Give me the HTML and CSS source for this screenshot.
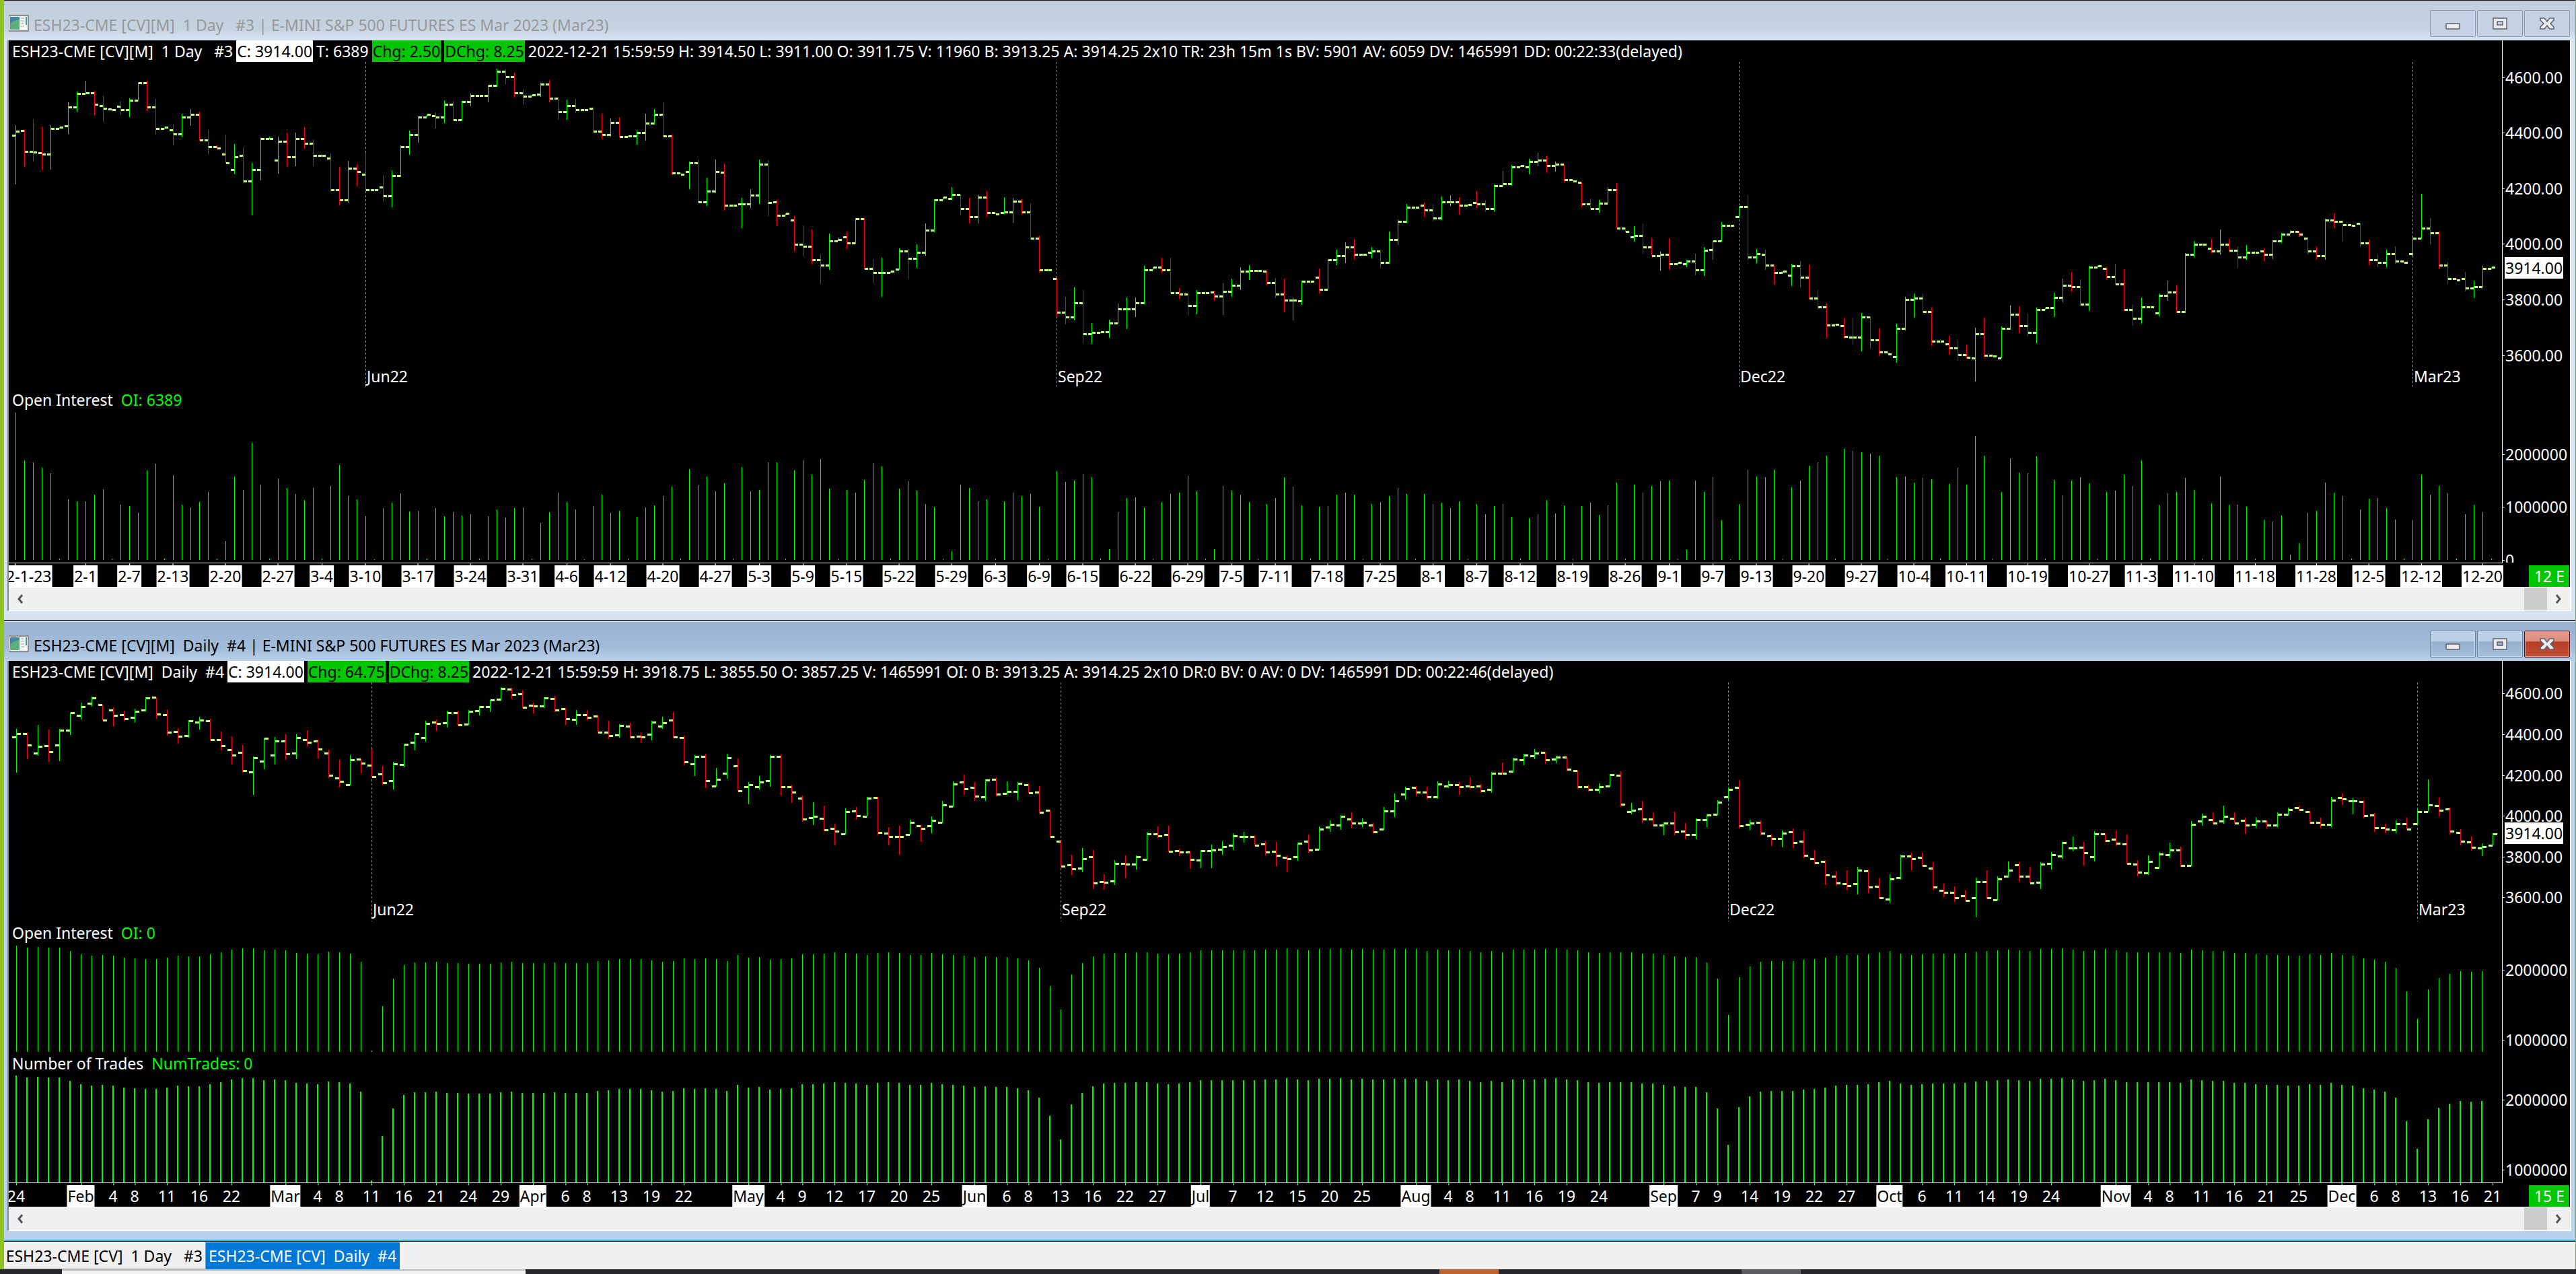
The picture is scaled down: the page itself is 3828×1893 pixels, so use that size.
FILE: index.html
```html
<!DOCTYPE html>
<html lang="en">
  <head>
    <title>ESH23-CME Charts</title>
    <meta charset="UTF-8" />
    <link rel="stylesheet" href="styles.css">
  </head>
  <body>
    <main class="workspace">
      <section class="window inactive">
        <header class="titlebar">
          <svg class="app-icon" viewBox="0 0 30 26">
            <rect x="0" y="1" width="30" height="25" fill="#8b8f92" />
            <rect x="1" y="3" width="27" height="21" fill="#f6f6f6" />
            <rect x="2" y="4" width="14" height="19" fill="#3f86a8" />
            <path d="M2 14 Q9 8 16 8 V23 H2 Z" fill="#5cae7a" />
            <path d="M18 6h5M18 10h5M18 14h5M18 18h5" stroke="#a5a5a5" stroke-width="1" />
            <rect x="25" y="4" width="2" height="12" fill="#4a97a0" />
          </svg>
          <h1 class="title">ESH23-CME [CV][M]  1 Day   #3 | E-MINI S&amp;P 500 FUTURES ES Mar 2023 (Mar23)</h1>
          <div class="controls">
            <button class="control" aria-label="Minimize">
              <svg viewBox="0 0 24 24"><rect x="2" y="12" width="20" height="8" rx="1" /></svg>
            </button>
            <button class="control" aria-label="Maximize">
              <svg viewBox="0 0 24 24"><path d="M2 4h20v16H2zM8 9v5h8V9z" fill-rule="evenodd" /></svg>
            </button>
            <button class="control" aria-label="Close">
              <svg viewBox="0 0 24 24"><path d="M2 4h6l4 5 4-5h6v3l-5 5 5 5v3h-6l-4-5-4 5H2v-3l5-5-5-5z" /></svg>
            </button>
          </div>
        </header>
        <div class="client">
          <div class="chart chart-session" id="chart3">
            <div class="panel" data-panel="price">
              <div class="plot-column">
                <div class="readout"><span>ESH23-CME [CV][M]  1 Day   #3</span><span class="last">C: 3914.00</span><span>T: 6389</span><span class="up">Chg: 2.50</span><span class="up">DChg: 8.25</span><span>2022-12-21 15:59:59 H: 3914.50 L: 3911.00 O: 3911.75 V: 11960 B: 3913.25 A: 3914.25 2x10 TR: 23h 15m 1s BV: 5901 AV: 6059 DV: 1465991 DD: 00:22:33(delayed)</span></div>
                <div class="plot"></div>
              </div>
              <div class="scale"></div>
            </div>
            <div class="panel" data-panel="interest">
              <div class="plot-column padded">
                <div class="caption">Open Interest  <span class="value">OI: 6389</span></div>
                <div class="plot"></div>
              </div>
              <div class="scale"></div>
            </div>
            <div class="dates"><span class="remaining">12 E</span></div>
          </div>
          <div class="scrollbar">
            <button class="arrow" aria-label="Scroll left"><svg viewBox="0 0 12 14"><path d="M9 1 L4 7 L9 13" /></svg></button>
            <div class="track"><div class="thumb"></div></div>
            <button class="arrow" aria-label="Scroll right"><svg viewBox="0 0 12 14"><path d="M3 1 L8 7 L3 13" /></svg></button>
          </div>
        </div>
      </section>

      <section class="window active">
        <header class="titlebar">
          <svg class="app-icon" viewBox="0 0 30 26">
            <rect x="0" y="1" width="30" height="25" fill="#8b8f92" />
            <rect x="1" y="3" width="27" height="21" fill="#f6f6f6" />
            <rect x="2" y="4" width="14" height="19" fill="#3f86a8" />
            <path d="M2 14 Q9 8 16 8 V23 H2 Z" fill="#5cae7a" />
            <path d="M18 6h5M18 10h5M18 14h5M18 18h5" stroke="#a5a5a5" stroke-width="1" />
            <rect x="25" y="4" width="2" height="12" fill="#4a97a0" />
          </svg>
          <h1 class="title">ESH23-CME [CV][M]  Daily  #4 | E-MINI S&amp;P 500 FUTURES ES Mar 2023 (Mar23)</h1>
          <div class="controls">
            <button class="control" aria-label="Minimize">
              <svg viewBox="0 0 24 24"><rect x="2" y="12" width="20" height="8" rx="1" /></svg>
            </button>
            <button class="control" aria-label="Maximize">
              <svg viewBox="0 0 24 24"><path d="M2 4h20v16H2zM8 9v5h8V9z" fill-rule="evenodd" /></svg>
            </button>
            <button class="control close" aria-label="Close">
              <svg viewBox="0 0 24 24"><path d="M2 4h6l4 5 4-5h6v3l-5 5 5 5v3h-6l-4-5-4 5H2v-3l5-5-5-5z" /></svg>
            </button>
          </div>
        </header>
        <div class="client">
          <div class="chart chart-daily" id="chart4">
            <div class="panel" data-panel="price">
              <div class="plot-column">
                <div class="readout"><span>ESH23-CME [CV][M]  Daily  #4</span><span class="last">C: 3914.00</span><span class="up">Chg: 64.75</span><span class="up">DChg: 8.25</span><span>2022-12-21 15:59:59 H: 3918.75 L: 3855.50 O: 3857.25 V: 1465991 OI: 0 B: 3913.25 A: 3914.25 2x10 DR:0 BV: 0 AV: 0 DV: 1465991 DD: 00:22:46(delayed)</span></div>
                <div class="plot"></div>
              </div>
              <div class="scale"></div>
            </div>
            <div class="panel" data-panel="interest">
              <div class="plot-column">
                <div class="caption">Open Interest  <span class="value">OI: 0</span></div>
                <div class="plot"></div>
              </div>
              <div class="scale"></div>
            </div>
            <div class="panel" data-panel="trades">
              <div class="plot-column">
                <div class="caption">Number of Trades  <span class="value">NumTrades: 0</span></div>
                <div class="plot"></div>
              </div>
              <div class="scale"></div>
            </div>
            <div class="dates"><span class="remaining">15 E</span></div>
          </div>
          <div class="scrollbar">
            <button class="arrow" aria-label="Scroll left"><svg viewBox="0 0 12 14"><path d="M9 1 L4 7 L9 13" /></svg></button>
            <div class="track"><div class="thumb"></div></div>
            <button class="arrow" aria-label="Scroll right"><svg viewBox="0 0 12 14"><path d="M3 1 L8 7 L3 13" /></svg></button>
          </div>
        </div>
      </section>

      <nav class="tabs">
        <button class="tab first">ESH23-CME [CV]  1 Day   #3</button>
        <button class="tab selected">ESH23-CME [CV]  Daily  #4</button>
      </nav>
    </main>
    <footer class="taskbar">
      <div class="task-search"></div>
      <div class="task-orange"></div>
      <div class="task-gray"></div>
    </footer>
    <script src="script.js"></script>
  </body>
</html>
```
FILE: styles.css
```css
* {
  box-sizing: border-box;
}

body {
  margin: 0;
  height: 100vh;
  display: flex;
  flex-direction: column;
  font-family: "Noto Sans", "Open Sans", sans-serif;
  font-size: 23px;
  line-height: 32px;
  background: #222428;
  overflow: hidden;
}

button {
  font: inherit;
  margin: 0;
  padding: 0;
}

.workspace {
  flex: 1;
  min-height: 0;
  display: flex;
  flex-direction: column;
  border-left: 6px solid #8fc31f;
  border-right: 1px solid #7fb03a;
}

.window {
  flex: 1;
  min-height: 0;
  display: flex;
  flex-direction: column;
  border-top: 2px solid #3b3d44;
  padding: 0 6px 13px 5px;
}

.inactive {
  background: #d7e4f2;
}

.active {
  background: #b9d1ea;
}

/* title bars */

.titlebar {
  height: 58px;
  flex: none;
  display: flex;
  align-items: flex-end;
  margin: 0 -6px 0 -5px;
  padding: 0 8px 5px 7px;
  border-top: 1px solid #eef2f6;
}

.inactive .titlebar {
  background: linear-gradient(#c2cfde, #c5d3e1 70%, #d8e6f3);
  color: #999;
}

.active .titlebar {
  height: 59px;
  background: linear-gradient(#98b4d2, #a2bbd8 65%, #b9d1ea);
  color: #000;
}

.app-icon {
  width: 30px;
  height: 26px;
  margin-bottom: 8px;
}

.title {
  flex: 1;
  margin: 0 0 2px 7px;
  font-size: 23px;
  font-weight: normal;
  line-height: 32px;
  white-space: pre;
}

.controls {
  display: flex;
  gap: 2px;
}

.control {
  width: 68px;
  height: 40px;
  display: flex;
  align-items: center;
  justify-content: center;
  border: 1px solid #8899b4;
  border-radius: 2px;
  background: #c4d2e4;
  box-shadow: inset 0 0 0 1px #cfdbe9;
}

.control svg {
  width: 24px;
  height: 24px;
  fill: #ececec;
  stroke: #5a6070;
  stroke-width: 1.5;
}

.active .control {
  border-color: #6c7f9c;
  background: linear-gradient(#bdd2e9, #b9cfe6 40%, #96b0cd 41%, #a3bddb);
  box-shadow: inset 0 0 0 1px #c6d9ed;
}

.active .close {
  border-color: #4a1520;
  background: linear-gradient(#e39a8c, #dc8d80 40%, #b53c26 41%, #c25038);
  box-shadow: inset 0 0 0 1px #e0a296;
}

/* charts */

.client {
  flex: 1;
  min-height: 0;
  display: flex;
  flex-direction: column;
  border-left: 2px solid #808890;
  border-right: 2px solid #fff;
  border-bottom: 1px solid #fff;
}

.chart {
  flex: 1;
  min-height: 0;
  display: grid;
  background: #000;
  color: #fff;
  overflow: hidden;
}

.chart-session {
  grid-template-rows: 517fr 259fr 36px;
}

.chart-daily {
  grid-template-rows: 387fr 195fr 194fr 36px;
}

.panel {
  display: flex;
  min-height: 0;
  overflow: hidden;
}

.plot-column {
  flex: 1;
  min-width: 0;
  display: flex;
  flex-direction: column;
}

.padded {
  padding-bottom: 4px;
}

.readout {
  display: flex;
  gap: 5px;
  padding-left: 5px;
  line-height: 32px;
  white-space: pre;
}

.last {
  background: #fff;
  color: #000;
  padding: 0 1px;
}

.up {
  background: #00c800;
  color: #000;
  padding: 0 1px;
}

.caption {
  padding-left: 5px;
  line-height: 34px;
  white-space: pre;
}

.value {
  color: #00ff00;
}

.plot {
  flex: 1;
  min-height: 0;
  position: relative;
}

.plot svg {
  display: block;
  width: 100%;
  height: 100%;
  shape-rendering: crispEdges;
}

.wick-up,
.bars {
  stroke: #00ff00;
  fill: none;
}

.wick-down {
  stroke: #ff0000;
  fill: none;
}

.price-ticks {
  stroke: #c0ff80;
  stroke-width: 3;
  fill: none;
}

.rollover-line {
  stroke: #8c8c8c;
  stroke-dasharray: 3 3;
}

.rollover {
  position: absolute;
  bottom: 0;
  line-height: 36px;
}

.scale {
  width: 101px;
  position: relative;
  border-left: 1px solid #fff;
  overflow: hidden;
}

.scale-label {
  position: absolute;
  left: 0;
  padding: 0 1px 0 4px;
  line-height: 32px;
  transform: translateY(-50%);
}

.scale-label::before {
  content: "";
  position: absolute;
  left: 0;
  top: 16px;
  width: 3px;
  height: 1px;
  background: #fff;
}

.scale-label.current {
  left: 3px;
  padding: 0 1px;
  background: #fff;
  color: #000;
}

.dates {
  position: relative;
  overflow: hidden;
}

.axis-line {
  height: 1px;
  background: #fff;
}

.date {
  position: absolute;
  top: 4px;
  height: 32px;
  padding: 0 1px;
  transform: translateX(-50%);
}

.date.boxed {
  background: #fff;
  color: #000;
}

.date::before {
  content: "";
  position: absolute;
  left: 50%;
  top: -4px;
  width: 1px;
  height: 4px;
  background: #fff;
}

.remaining {
  position: absolute;
  top: 4px;
  right: 1px;
  width: 60px;
  height: 32px;
  padding-right: 7px;
  text-align: right;
  background: #00c800;
}

/* scroll bars */

.scrollbar {
  height: 35px;
  flex: none;
  display: flex;
  background: #f0f0f0;
  border-top: 1px solid #fff;
}

.arrow {
  width: 34px;
  border: 0;
  background: none;
  display: flex;
  align-items: center;
  justify-content: center;
}

.arrow svg {
  width: 12px;
  height: 14px;
  fill: none;
  stroke: #555;
  stroke-width: 3;
}

.track {
  flex: 1;
  display: flex;
  justify-content: flex-end;
}

.thumb {
  width: 34px;
  background: #cdcdcd;
}

/* bottom strip */

.tabs {
  flex: none;
  height: 44px;
  display: flex;
  background: #f0f0f0;
  border-top: 2px solid #35b5d8;
  box-shadow: inset 0 1px #111, inset 0 2px #fff;
  padding-top: 2px;
}

.tab {
  height: 40px;
  border: 0;
  border-right: 1px solid #999;
  border-bottom: 1px solid #999;
  padding: 0 4px;
  background: #f0f0f0;
  color: #000;
  white-space: pre;
}

.tab.first {
  width: 300px;
  display: flex;
  align-items: center;
  justify-content: flex-end;
  overflow: hidden;
}

.tab.selected {
  background: #0078d7;
  color: #fff;
  border-color: #0078d7;
}

.taskbar {
  height: 7px;
  flex: none;
  display: flex;
  background: #24262b;
}

.task-search {
  width: 18%;
  margin-left: 92px;
  border-top: 2px solid #bdbdbd;
  background: #f2f2f2;
}

.task-orange {
  width: 88px;
  margin-left: 1358px;
  background: #c0622c;
}

.task-gray {
  width: 88px;
  margin-left: 361px;
  background: #5a5c60;
}
```
FILE: script.js
```js
// Each bar is listed as levels counted down from `base` in units of `step`:
//   close | open close | high low close | open high low close
// A missing open repeats the previous close.
const sessionPrices = [
  {
    base: 4877.8,
    step: 0.9579,
    bars: `509 470 692 493,491 487 627 568,450 606 572,573 475 640 580,470 637 484,479,474 384 502 403,345 420 352,303 352 348,341 432 393,
396 360 458 408,409 411,399 380 432 413,370 440 378,311 380 312,303 417 403,372 506 484,479,487 468 546 502,427 516 441,
410 473 431,420 530 525,487 579 552,545 560 557,578 506 615 613,638 541 656 588,585 554 690 681,612 809 638,517 678 521,513 524 520,
603 513 652 532,498 627 588,498 625 522,478 559 538,524 622 583,583,595 577 721 714,627 771 752,604 761 631,617 701 646,
654 574 718 712,712,702 660 756 737,640 779 659,546 665 552,491 582 505,437 536 439,431,436 422 483 441,377 463 391,
379 452 449,380 452 381,352 400 358,358,320 384 322,258 325 269,261 315 289,273 367 350,336 392 361,356,
355 312 363 315,301 384 370,363 450 421,375 450 396,398 373 425 411,411,406 403 494 492,427 524 505,445 513 459,441 517 514,
514 510,491 544 499,427 529 464,410 468 431,384 517 512,506 655 651,654,646 607 711 613,599 764 758,668 774 717,
599 726 646,648 615 792 770,772,767 744 857 767,711 781 734,599 766 616,602 812 760,758 751 850 808,801,826 812 946 919,
847 964 925,862 994 977,956 1067 997,878 1014 904,893 905 901,891 870 936 914,820 916 823,818 1012 1010,974 1065 1023,969 1115 1023,
1018,1011 933 1013 942,936 1050 972,918 1007 947,840 961 866,748 873 750,742,745 703 751 732,730 809 783,744 840 813,
731 840 740,718 814 798,803,800 741 805 796,744 837 755,748 806 796,764 900 896,885 1024 1013,1008 1018 1015,1046 1045 1191 1172,
1115 1219 1192,1080 1204 1137,1090 1290 1253,1214 1292 1250,1246,1201 1270 1213,1141 1216 1160,1118 1237 1160,1118 1191 1137,998 1143 1013,
1005,969 1027 1013,969 1103 1099,1082 1123 1106,1099 1186 1147,1090 1181 1099,1099,1097 1093 1130 1112,1065 1184 1094,1047 1115 1071,
1004 1090 1020,996 1052 1016,1016,1020 1017 1072 1061,1044 1120 1104,1047 1173 1127,1118 1204 1127,1129 1055 1146 1058,1056,1043 1009 1103 1086,
975 1088 977,938 996 960,910 989 927,898 976 955,957 955,949 928 971 944,943 1006 987,870 990 899,824 921 833,766 836 780,
778,772 761 813 788,766 832 820,738 827 758,733 774 758,741 807 770,768,760 718 781 765,754 797 783,693 797 699,
642 701 691,620 698 626,623,628 597 655 608,574 625 601,587 650 623,607 645 618,617 685 676,679,686 685 779 765,
746 792 783,751 799 763,703 764 714,688 858 856,855 872 871,891 850 908 884,840 953 927,895 962 960,946 1017 957,895 1014 990,
985,990 976 1004 982,953 1034 1015,928 1037 941,939 905 976 906,835 908 848,848,815 776 818 777,733 978 965,936 989 952,
955 938 1014 997,995 1070 1025,1018,1033 991 1075 1000,981 1080 1043,994 1122 1121,1090 1163 1152,1141 1270 1220,1218,1225 1196 1272 1263,
1266 1194 1295 1268,1176 1320 1192,1190 1310 1276,1234 1338 1322,1329,1341 1216 1363 1235,1115 1242 1124,1103 1194 1121,1103 1176 1171,1156 1300 1283,
1281,1293 1262 1333 1306,1277 1356 1332,1295 1348 1342,1344 1232 1434 1253,1194 1343 1334,1337,1344 1227 1346 1235,1148 1238 1182,1151 1252 1223,
1179 1265 1248,1156 1290 1162,1155,1100 1191 1117,1047 1136 1073,1022 1098 1076,1050 1148 1142,1000 1168 1003,1005 998,1008 1005 1050 1038,
991 1069 1066,1012 1165 1162,1143 1224 1197,1118 1216 1152,1154,1177 1103 1189 1109,1055 1130 1097,1072 1176 1170,951 1176 957,905 966 917,
917,934 898 953 942,862 956 919,898 942 940,926 1007 965,921 976 947,947,944 933 981 957,903 974 906,876 912 879,
866 880 871,870 890 881,896 890 956 944,926 976 960,822 976 826,802 857 833,827 908 844,846,839 836 928 914,900 996 975,
956 1004 985,938 1004 952,926 990 982,987,952 888 962 896,728 898 858,819 918 876,870 1012 997,984 1067 1048,1051,
1048 1022 1095 1083,1055 1120 1076,999 1078 1008,1005`,
  },
];

const dailyPrices = [
  {
    base: 4700,
    step: 1.0997,
    bars: `284 249 444 271,271 268 384 320,358 231 369 328,325 252 396 350,322 250 393 254,254 177 276 178,190 132 207 151,136 105 150 112,142 140 212 211,166 153 237 190,
187 168 216 205,199 159 222 172,166 108 170 112,109 107 204 184,187 162 278 265,262 246 315 281,280 210 289 214,220 195 252 211,214 204 300 298,298 261 346 325,
343 282 408 365,355 321 444 436,442 372 543 379,394 290 430 292,365 285 408 304,304 273 387 361,358 273 384 289,298 255 327 310,304 297 381 340,358 342 468 457,
469 387 510 484,499 366 502 388,385 383 447 403,412 339 466 463,451 414 498 490,481 396 519 406,409 318 420 319,310 270 345 271,289 213 306 226,220 207 258 226,
223 168 243 178,178 168 234 232,229 165 232 172,169 148 189 151,151 120 174 121,118 63 122 70,73 66 114 97,94 78 156 154,145 132 180 148,148 108 156 112,
115 101 174 166,160 156 231 205,208 165 231 187,187 165 210 199,193 190 267 265,265 213 294 280,277 228 288 235,238 222 290 286,283 267 312 286,274 213 300 220,
238 195 248 223`,
  },
  {
    base: 4667,
    step: 1.1573,
    bars: `172 137 248 241,244 238 361 347,355 318 408 324,324 314 459 429,449 373 452 423,395 314 418 332,366 333 471 469,454 433 527 446,452 408 464 432,429 320 454 324,
326 316 490 454,452 445 522 475,503 490 601 589,583 519 616 580,586 533 641 637,629 610 701 640,652 545 655 560,557 540 593 575,578 496 580 503,500 495 658 646,
649 624 701 665,663 618 741 665,655 593 657 603,620 615 687 629,620 579 650 597,603 514 608 529,537 431 540 443,434 402 488 463,457 433 513 492,495 422 513 426,
423 413 493 486,483 430 487 474,472 434 510 440,446 438 483 480,477 449 565 563,554 551 668 665,683 680 795 791,785 741 827 802,799 713 815 757,751 721 886 862,
854 824 889 857,851 764 870 779,779 744 841 782,782 744 804 751,762 643 765 652,652 621 669 660,655 619 730 728,725 716 747 731,731 728 801 760,765 722 798 725,
725 698 798 720,717 684 741 708,702 651 721 660,665 644 690 663,663 660 704 702,697 684 744 731,728 687 790 745,754 745 815 757,751 691 767 694,683 656 733 722,
717 621 720 632,623 596 644 612,617 574 636 578,589 562 627 608,606 587 624 603,615 607 650 643,632 540 635 557,557 482 582 514,486 453 507 463,457 450 493 475,
475 453 507 497,495 430 505 443,449 428 460 446,446 433 488 452,449 413 465 454,449 442 479 469,466 390 479 397,395 351 400 397,389 332 393 335,338 314 361 320,
323 294 336 312,309 306 356 338,335 322 354 329,329 327 385 378,386 384 462 454,452 444 472 466,466 440 482 454,449 399 452 403,406 388 539 526,558 522 570 552,
546 514 607 589,589 562 617 615,615 603 659 606,606 559 659 643,640 607 673 655,657 587 676 594,594 569 624 572,569 510 572 520,495 455 508 466,457 425 629 620,
614 593 639 608,603 597 659 649,660 657 704 672,674 639 710 649,643 629 714 689,683 641 755 745,757 721 780 774,771 765 870 828,831 810 872 862,865 807 892 871,
865 793 909 808,811 805 904 877,874 841 926 923,928 824 947 845,839 741 848 748,748 733 807 757,754 733 790 788,797 773 892 877,891 864 921 902,902 875 941 925,
916 892 936 934,925 838 1006 854,854 807 928 925,931 832 934 845,831 770 838 808,785 773 855 831,831 793 862 860,857 773 887 782,777 730 804 742,748 686 758 689,
714 664 727 714,711 687 787 734,751 641 770 654,654 650 687 680,677 639 704 694,697 656 780 777,780 764 832 814,817 744 827 769,794 730 801 737,740 690 755 720,
722 707 792 788,788 599 791 612,600 567 619 578,592 562 610 606,600 533 609 578,586 562 609 606,597 584 653 617,612 582 627 600,600 597 629 615,615 563 624 569,
569 542 576 549,543 533 556 549,560 556 610 603,603 584 627 612,612 496 624 509,498 482 530 506,512 502 571 512,515 511 587 575,572 564 644 626,626 610 651 632,
635 596 651 609,609 584 637 632,609 549 612 558,558 422 560 529,532 499 579 552,546 541 657 640,646 633 701 683,686 664 724 711,714 693 747 708,700 649 702 652`,
  },
];

const sessionInterest = [
  656, 443, 434, 410, 386, 5, 269, 260, 260, 290, 314, 5, 245, 239, 209, 398, 428, 5, 377, 245,
  233, 257, 302, 5, 83, 371, 311, 521, 335, 5, 362, 320, 293, 266, 320, 5, 329, 422, 284, 269,
  194, 2, 230, 254, 296, 215, 218, 5, 230, 194, 212, 197, 203, 5, 194, 224, 188, 230, 233, 5,
  164, 212, 299, 257, 224, 2, 239, 290, 209, 218, 5, 191, 233, 242, 284, 326, 5, 404, 332, 371,
  305, 341, 5, 413, 305, 311, 434, 434, 5, 400, 445, 380, 449, 317, 5, 311, 299, 356, 431, 416,
  5, 317, 350, 308, 248, 236, 5, 38, 335, 320, 260, 269, 5, 260, 300, 285, 293, 236, 5, 395,
  347, 353, 383, 368, 5, 47, 212, 275, 278, 233, 5, 257, 293, 299, 374, 305, 5, 47, 330, 310,
  290, 257, 5, 248, 275, 368, 326, 242, 5, 236, 239, 290, 299, 290, 5, 248, 257, 284, 320, 293,
  5, 293, 250, 255, 230, 260, 5, 248, 203, 239, 248, 191, 5, 185, 203, 266, 206, 242, 5, 239,
  254, 200, 242, 344, 5, 335, 300, 330, 350, 355, 5, 44, 353, 302, 368, 176, 2, 248, 401, 371,
  368, 401, 5, 323, 353, 419, 434, 464, 5, 494, 485, 480, 475, 465, 5, 368, 371, 344, 365, 359,
  5, 338, 410, 335, 551, 464, 5, 302, 452, 389, 386, 461, 5, 356, 287, 353, 368, 341, 5, 302,
  308, 380, 329, 443, 5, 245, 296, 302, 365, 311, 5, 251, 371, 245, 245, 236, 5, 179, 170, 197,
  23, 74, 209, 218, 344, 299, 284, 5, 224, 272, 275, 230, 179, 5, 176, 380, 290, 329, 296, 5,
  203, 245, 212, 5,
].map((n) => n / 235.5);

const dailyInterest = [
  420, 412, 415, 412, 412, 399, 386, 381, 383, 381, 373, 370, 367, 367, 373, 381, 378, 378, 386, 394,
  404, 410, 410, 402, 404, 402, 391, 389, 386, 397, 394, 389, 357, 8, 182, 291, 344, 354, 354, 357,
  352, 352, 349, 349, 349, 354, 357, 352, 352, 352, 354, 352, 352, 352, 360, 362, 367, 367, 367, 362,
  357, 359, 370, 368, 370, 368, 359, 383, 373, 375, 365, 368, 370, 386, 386, 389, 394, 392, 389, 383,
  392, 394, 392, 383, 383, 392, 386, 383, 381, 375, 378, 375, 375, 370, 362, 333, 262, 169, 306, 352,
  378, 389, 392, 392, 394, 394, 389, 386, 389, 394, 402, 402, 402, 402, 402, 402, 405, 405, 409, 405,
  402, 408, 408, 409, 405, 408, 405, 405, 408, 408, 408, 399, 405, 402, 405, 399, 394, 399, 394, 405,
  405, 405, 408, 409, 405, 402, 394, 392, 394, 394, 394, 389, 389, 383, 378, 375, 375, 355, 291, 148,
  296, 339, 357, 359, 359, 359, 365, 368, 373, 381, 383, 383, 386, 394, 399, 389, 383, 386, 389, 389,
  389, 392, 396, 399, 402, 405, 402, 399, 408, 408, 409, 405, 399, 402, 408, 402, 394, 394, 394, 394,
  394, 392, 405, 402, 399, 399, 392, 392, 386, 383, 383, 381, 381, 386, 383, 392, 383, 381, 370, 365,
  357, 333, 241, 131, 249, 294, 309, 320, 318, 320,
].map((n) => 0.822 + n / 275);

const charts = [
  {
    id: "chart3",
    slots: 285,
    lead: 0.8,
    tick: 5,
    prices: parsePrices(sessionPrices),
    rollovers: { 40: "Jun22", 119: "Sep22", 197: "Dec22", 274: "Mar23" },
    panels: {
      price: { high: 4654.9, low: 3480.3 },
      interest: { high: 2.815, low: 0, values: sessionInterest, labels: [2, 1, 0], weight: 1 },
    },
    dates: `0:2022-1-23 8:2-1 13:2-7 18:2-13 24:2-20 30:2-27 35:3-4 40:3-10 46:3-17 52:3-24 58:3-31 63:4-6 68:4-12
74:4-20 80:4-27 85:5-3 90:5-9 95:5-15 101:5-22 107:5-29 112:6-3 117:6-9 122:6-15 128:6-22 134:6-29 139:7-5 144:7-11
150:7-18 156:7-25 162:8-1 167:8-7 172:8-12 178:8-19 184:8-26 189:9-1 194:9-7 199:9-13 205:9-20 211:9-27 217:10-4
223:10-11 230:10-19 237:10-27 243:11-3 249:11-10 256:11-18 263:11-28 269:12-5 275:12-12 282:12-20`,
  },
  {
    id: "chart4",
    slots: 231.6,
    lead: 0.7,
    tick: 6,
    prices: parsePrices(dailyPrices),
    rollovers: { 33: "Jun22", 97: "Sep22", 159: "Dec22", 223: "Mar23" },
    panels: {
      price: { high: 4653.8, low: 3482.6 },
      interest: { high: 2.37, low: 0.822, values: dailyInterest, labels: [2, 1], weight: 1 },
      trades: { high: 2.36, low: 0.822, values: dailyInterest, labels: [2, 1], weight: 2 },
    },
    dates: `0:24 6:Feb 9:4 11:8 14:11 17:16 20:22 25:Mar 28:4 30:8 33:11 36:16 39:21 42:24 45:29 48:Apr 51:6 53:8 56:13
59:19 62:22 68:May 71:4 73:9 76:12 79:17 82:20 85:25 89:Jun 92:6 94:8 97:13 100:16 103:22 106:27 110:Jul 113:7 116:12
119:15 122:20 125:25 130:Aug 133:4 135:8 138:11 141:16 144:19 147:24 153:Sep 156:7 158:9 161:14 164:19 167:22 170:27
174:Oct 177:6 180:11 183:14 186:19 189:24 195:Nov 198:4 200:8 203:11 206:16 209:21 212:25 216:Dec 219:6 221:8 224:13
227:16 230:21`,
  },
];

function parsePrices(blocks) {
  const out = [];
  let last = 0;
  blocks.forEach(({ base, step, bars }) => {
    bars.split(",").forEach((text) => {
      const n = text.trim().split(" ").map((v) => base - v * step);
      const close = n[n.length - 1];
      const open = n.length % 2 === 0 ? n[0] : last;
      const high = n.length > 2 ? n[n.length - 3] : Math.max(open, close);
      const low = n.length > 2 ? n[n.length - 2] : Math.min(open, close);
      out.push({ open, high, low, close });
      last = close;
    });
  });
  return out;
}

function addLabel(parent, className, text, side, offset) {
  const label = document.createElement("span");
  label.className = className;
  label.textContent = text;
  label.style[side] = offset + "px";
  parent.appendChild(label);
}

function drawChart(chart) {
  const root = document.getElementById(chart.id);
  root.querySelectorAll(".scale-label, .rollover, .date, .axis-line").forEach((el) => el.remove());
  const width = root.querySelector(".plot").clientWidth;
  const xAt = (i) => Math.round(((+i + chart.lead) * width) / chart.slots);

  for (const [name, panel] of Object.entries(chart.panels)) {
    const el = root.querySelector(`[data-panel="${name}"]`);
    const plot = el.querySelector(".plot");
    const scale = el.querySelector(".scale");
    const height = plot.clientHeight;
    const top = plot.getBoundingClientRect().top - el.getBoundingClientRect().top;
    const yAt = (v) => Math.round(((panel.high - v) / (panel.high - panel.low)) * height);
    let svg = "";

    if (name === "price") {
      let up = "";
      let down = "";
      let ticks = "";
      for (const i in chart.rollovers) {
        const x = xAt(i) + 0.5;
        svg += `<path class="rollover-line" d="M${x} 0V${height}" />`;
      }
      chart.prices.forEach((bar, i) => {
        const x = xAt(i);
        const wick = `M${x + 0.5} ${yAt(bar.high)}V${yAt(bar.low)}`;
        if (bar.close < bar.open) down += wick;
        else up += wick;
        ticks += `M${x - chart.tick} ${yAt(bar.open) + 0.5}h${chart.tick}`;
        ticks += `M${x + 1} ${yAt(bar.close) + 0.5}h${chart.tick}`;
      });
      svg += `<path class="wick-up" d="${up}" /><path class="wick-down" d="${down}" />`;
      svg += `<path class="price-ticks" d="${ticks}" />`;
      for (let p = 4600; p >= 3600; p -= 200) {
        addLabel(scale, "scale-label", p.toFixed(2), "top", top + yAt(p));
      }
      addLabel(scale, "scale-label current", "3914.00", "top", top + yAt(3914));
    } else {
      const shift = panel.weight === 1 ? 0.5 : 0;
      const d = panel.values.map((v, i) => `M${xAt(i) + shift} ${height}V${yAt(v)}`).join("");
      svg = `<path class="bars" stroke-width="${panel.weight}" d="${d}" />`;
      panel.labels.forEach((m) => {
        addLabel(scale, "scale-label", String(m * 1000000), "top", top + yAt(m));
      });
    }

    plot.innerHTML = `<svg>${svg}</svg>`;
    if (name === "price") {
      for (const i in chart.rollovers) {
        addLabel(plot, "rollover", chart.rollovers[i], "left", xAt(i) + 2);
      }
    }
  }

  const dates = root.querySelector(".dates");
  const line = document.createElement("div");
  line.className = "axis-line";
  line.style.width = width + 1 + "px";
  dates.prepend(line);
  chart.dates.split(/\s+/).forEach((entry) => {
    const [i, text] = entry.split(":");
    const boxed = chart.id === "chart3" || isNaN(text);
    addLabel(dates, boxed ? "date boxed" : "date", text, "left", xAt(i));
  });
}

function drawAll() {
  charts.forEach(drawChart);
}

drawAll();
window.addEventListener("resize", drawAll);
```
